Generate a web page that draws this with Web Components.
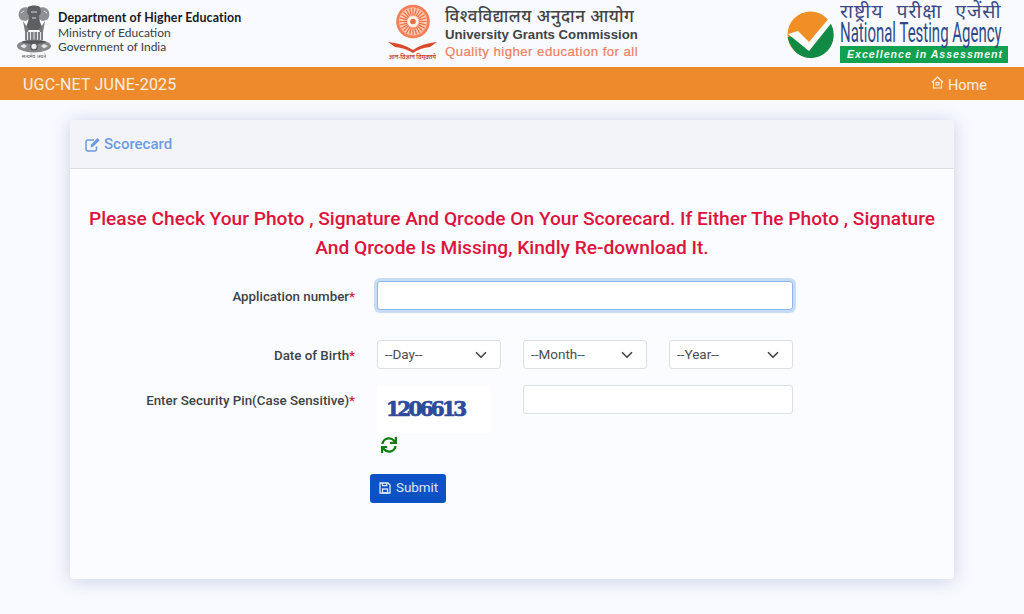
<!DOCTYPE html>
<html lang="en"><head><meta charset="utf-8"><title>Scorecard</title>
<style>
html,body{margin:0;padding:0;background:#f8faff;height:614px;overflow:hidden;font-family:Roboto,"Liberation Sans",sans-serif;color:#333}
</style></head><body>
<site-header></site-header>
<nav-bar></nav-bar>
<score-card></score-card>
<script>
function el(name, html){customElements.define(name,class extends HTMLElement{constructor(){super();this.attachShadow({mode:'open'}).innerHTML=html;}});}
const hindi='"Noto Sans","Noto Sans CJK SC","DejaVu Sans",sans-serif';
el('moe-logo',`<style>:host{display:flex;align-items:flex-start;gap:6px;font-family:Lato,"Noto Sans",sans-serif;color:#3a3d42}
.t{display:flex;flex-direction:column;padding-top:11px;font-size:12px;line-height:14.7px;white-space:nowrap}b{color:#17191d;font-size:12.4px;font-weight:700;letter-spacing:.14px}svg{display:block;margin:4px 0 0 -1px}text{font:5px ${hindi}}</style>
<svg width="36" height="55" viewBox="0 0 36 55">
<g fill="#6f7174">
<path d="M3 8c1-4 6-6 10-4l1 3-2 4 2 3-4 3-5-1c-2-2-3-5-2-8z" fill="#8e9093"/><path d="M33 8c-1-4-6-6-10-4l-1 3 2 4-2 3 4 3 5-1c2-2 3-5 2-8z" fill="#8e9093"/>
<path d="M12 3c3-2 9-2 12 0l1 5-2 5 1 5 2 5-2 3H12l-2-3 2-5 1-5-2-5z" fill="#5d5f62"/>
<path d="M7 17c2 3 4 6 6 8l-1 3H9zM29 17c-2 3-4 6-6 8l1 3h3z" fill="#777a7d"/>
<rect x="9" y="28" width="18" height="8" fill="#7d7f82"/></g>
<path d="M11.500 28v8M14.500 28v8M18 27v9M21.500 28v8M24.500 28v8" stroke="#e6e7e9" stroke-width="1"/>
<path d="M5 9l3-2M31 9l-3-2M15 8h6M16 14h4" stroke="#d8d9db" stroke-width="1"/>
<ellipse cx="18" cy="42" rx="17" ry="6.500" fill="#85878a"/>
<ellipse cx="18" cy="38" rx="12" ry="1.800" fill="#54565a"/>
<circle cx="18" cy="42.500" r="3.300" fill="#eceded" stroke="#55575a" stroke-width="1.300"/>
<path d="M4 42l4-2 3 2-3 2.500zM32 42l-4-2-3 2 3 2.500z" fill="#e3e4e6"/>
<text x="18" y="53.500" text-anchor="middle" fill="#55575a">सत्यमेव जयते</text>
</svg>
<div class="t"><b>Department of Higher Education</b><span>Ministry of Education</span><span>Government of India</span></div>`);
const spokes=Array.from({length:24},(_,i)=>{const a=i*Math.PI/12;const c=Math.cos(a),s=Math.sin(a);return `M${(20+6*c).toFixed(1)} ${(17.500+6*s).toFixed(1)}L${(20+13.500*c).toFixed(1)} ${(17.500+13.500*s).toFixed(1)}`}).join('');
el('ugc-logo',`<style>:host{display:flex;gap:8px;align-items:flex-start;font-family:"Liberation Sans",Arial,sans-serif}
svg{display:block;margin-top:4px}.t{display:flex;flex-direction:column;padding-top:6px;white-space:nowrap}
.h{font:500 17px/20px ${hindi};color:#444;letter-spacing:.5px}.e{font-weight:700;font-size:13.2px;line-height:17px;color:#3f4347}.q{font-size:13.2px;line-height:17px;color:#ee7f5f;letter-spacing:.47px;-webkit-text-stroke:.2px #ee7f5f}text{font:600 6px ${hindi}}</style>
<svg width="49" height="56" viewBox="0 0 49 56"><g transform="translate(5 0)"><circle cx="20" cy="17.500" r="16.800" fill="#f47f57"/><circle cx="20" cy="17.500" r="14" fill="#fdc9b2"/><path d="${spokes}" stroke="#f06f42" stroke-width="1.200"/><circle cx="20" cy="17.500" r="5.500" fill="#fff0e8"/><circle cx="20" cy="17.500" r="2.800" fill="#f06f42"/></g>
<path d="M0 38q14 1 25 8q10-7 24-8l-7 5q-10 1-17 6q-8-5-18-6z" fill="#da4a2c"/><text x="24.500" y="55" text-anchor="middle" fill="#c9432c" textLength="47" lengthAdjust="spacingAndGlyphs">ज्ञान-विज्ञान विमुक्तये</text></svg>
<div class="t"><span class="h">विश्वविद्यालय अनुदान आयोग</span><span class="e">University Grants Commission</span><span class="q">Quality higher education for all</span></div>`);
el('nta-logo',`<style>:host{display:flex;gap:6px;align-items:flex-start;font-family:"Liberation Sans",Arial,sans-serif}
svg{display:block;margin-top:11px}.t{display:flex;flex-direction:column;width:168px;padding-top:2px;white-space:nowrap;color:#2c4a86;overflow:hidden}
.h{font:400 19.5px/18px ${hindi};color:#3b4a86;letter-spacing:.9px;word-spacing:7px}.n{display:block;font-family:Roboto,sans-serif;font-size:27px;line-height:26px;height:26px;transform:scaleX(.555);transform-origin:0 50%}
.x{background:#12a150;color:#f2fbf4;font:italic 700 10.600px/17px "Liberation Sans",sans-serif;letter-spacing:1px;height:17px;padding-left:7px}</style>
<svg width="47" height="47" viewBox="0 0 47 47"><circle cx="23.500" cy="23.500" r="23" fill="#ef8f26"/><path d="M.6 26c3 13 12 21 23 21 13 0 23-10 23-23 0-6-2-10-4-13L23 33 12 24z" fill="#118a45"/><path d="M1 23l10-3 11 11L43 6l3 4-24 30z" fill="#fff"/></svg>
<div class="t"><span class="h">राष्ट्रीय परीक्षा एजेंसी</span><span class="n">National Testing Agency</span><span class="x">Excellence in Assessment</span></div>`);
el('site-header',`<style>:host{display:grid;grid-template-columns:371px 399px 1fr;height:67px;padding-left:17px;background:#f8fafd;overflow:hidden}</style><moe-logo></moe-logo><ugc-logo></ugc-logo><nta-logo></nta-logo>`);
el('nav-bar',`<style>:host{display:flex;align-items:center;justify-content:space-between;height:33px;padding:1px 37px 0 23px;background:#ec8a2c;color:#fbeee0;font-size:16px;box-sizing:border-box}
.b{letter-spacing:.2px}.h{display:flex;align-items:center;gap:4px;font-size:14.5px;padding-top:2px}svg{display:block;margin-top:-6px}</style>
<span class="b">UGC-NET JUNE-2025</span><span class="h"><svg width="13" height="13" viewBox="0 0 13 13" fill="none" stroke="#fbeee0" stroke-width="1.1"><path d="M.8 6.500 6.500 1l5.700 5.500M2.500 5.500v6.500h8V5.500"/><rect x="5" y="6.500" width="3" height="2.500"/></svg>Home</span>`);
el('form-row',`<style>:host{display:grid;grid-template-columns:285px 416px;column-gap:22px;align-items:start}
.l{text-align:right;font-weight:500;font-size:13.35px;color:#3d4247;line-height:18px;padding-top:var(--lt,0px)}.r{color:#dc143c}</style>
<div class="l"><slot name="label"></slot><span class="r">*</span></div><div><slot></slot></div>`);
el('ui-select',`<style>:host{display:flex;align-items:center;justify-content:space-between;box-sizing:border-box;height:29px;padding:0 13px 2px 7px;border:1px solid #dcdfe4;border-radius:3px;background:#fff;font-size:13.5px;color:#4a4e53}svg{display:block;margin-top:2px}</style>
<span><slot></slot></span><svg width="12" height="8" viewBox="0 0 12 8" fill="none" stroke="#3d4145" stroke-width="1.600"><path d="M1 1.200 6 6.200l5-5"/></svg>`);
el('ui-button',`<style>:host{display:inline-flex;align-items:center;gap:5px;box-sizing:border-box;height:29px;width:76px;padding:0 0 2px 9px;border-radius:3px;background:#0d52c4;color:#dfe8f7;font-size:13.4px}svg{display:block}</style>
<svg width="12" height="12" viewBox="0 0 12 12" fill="none" stroke="#dfe8f7" stroke-width="1.300"><path d="M1 1h8l2 2v8H1z"/><path d="M3.500 1v2.600h4.200V1"/><rect x="3.500" y="7" width="5" height="4"/></svg><slot></slot>`);
el('score-card',`<style>:host{display:flex;flex-direction:column;box-sizing:border-box;width:884px;height:459px;margin:20px 0 0 70px;background:#fff;border-radius:4px;box-shadow:0 2px 18px rgba(110,125,175,.33)}
.head{display:flex;align-items:center;gap:3px;box-sizing:border-box;height:49px;padding:0 15px;background:#f3f4f7;border-bottom:1px solid #dcdde0;border-radius:4px 4px 0 0;color:#6e9be0;font-size:15px;font-weight:500}
.body{display:flex;flex-direction:column;background:#fbfcff;flex:1;border-radius:0 0 4px 4px}
h2{margin:35px 0 19px;padding:0 10px;text-align:center;color:#dc143c;font-size:19.15px;line-height:29px;font-weight:500}
.form{display:flex;flex-direction:column}
.f{display:block;box-sizing:border-box;width:100%;border:1px solid #dcdfe4;border-radius:3px;background:#fff;outline:none;padding:0;margin:0}
.app{height:29px;border-color:#8eb6ec;box-shadow:0 0 0 3px #c9dcf7}
.sel{display:grid;grid-template-columns:repeat(3,124px);gap:22px}
.cap{display:flex;gap:32px}.capl{width:114px}
.img{display:flex;align-items:center;box-sizing:border-box;height:48px;padding-left:9px;background:#fff;color:#2d4a9c;font:700 20px "DejaVu Serif",serif;letter-spacing:-2.700px;-webkit-text-stroke:.7px #2d4a9c}
.rf{display:block;margin:4px 0 0 4px}.capi{width:270px;height:29px}
.sub{margin:21px 0 0 300px}.sp1{height:30px}.sp2{height:16px}</style>
<div class="head"><svg width="16" height="15" viewBox="0 0 16 15" fill="none" stroke="#6e9be0" stroke-width="1.500"><path d="M11.500 9.500V12a2 2 0 0 1-2 2H3a2 2 0 0 1-2-2V5a2 2 0 0 1 2-2h6"/><path d="M6 7.500 12.500 1l2.200 2.200-6.500 6.500-2.700.5z" fill="#6e9be0" stroke="none"/></svg>Scorecard</div>
<div class="body"><h2>Please Check Your Photo , Signature And Qrcode On Your Scorecard. If Either The Photo , Signature And Qrcode Is Missing, Kindly Re-download It.</h2>
<div class="form">
<form-row style="--lt:7px"><span slot="label">Application number</span><input class="f app" aria-label="Application number"></form-row>
<div class="sp1"></div>
<form-row style="--lt:7px"><span slot="label">Date of Birth</span><div class="sel"><ui-select>--Day--</ui-select><ui-select>--Month--</ui-select><ui-select>--Year--</ui-select></div></form-row>
<div class="sp2"></div>
<form-row style="--lt:7px"><span slot="label">Enter Security Pin(Case Sensitive)</span><div class="cap"><div class="capl"><div class="img">1206613</div><svg class="rf" width="16" height="16" viewBox="0 0 512 512" fill="#0f7d12"><path d="M440.65 12.57l4 82.77A247.16 247.16 0 0 0 255.83 8C134.73 8 33.91 94.92 12.29 209.82A12 12 0 0 0 24.09 224h49.05a12 12 0 0 0 11.67-9.26 175.91 175.91 0 0 1 317-56.94l-101.46-4.86a12 12 0 0 0-12.57 12v47.41a12 12 0 0 0 12 12H500a12 12 0 0 0 12-12V12a12 12 0 0 0-12-12h-47.37a12 12 0 0 0-11.98 12.57zM255.83 432a175.61 175.61 0 0 1-146-77.8l101.8 4.87a12 12 0 0 0-12.57-12v-47.4a12 12 0 0 0-12-12H12a12 12 0 0 0-12 12V500a12 12 0 0 0 12 12h47.35a12 12 0 0 0 12-12.6l-4.15-82.57A247.17 247.17 0 0 0 255.83 504c121.11 0 221.93-86.92 243.55-201.82a12 12 0 0 0-11.8-14.18h-49.05a12 12 0 0 0-11.67 9.26A175.86 175.86 0 0 1 255.83 432z"/></svg></div><input class="f capi" aria-label="Security pin"></div></form-row>
<div class="sub"><ui-button>Submit</ui-button></div>
</div></div>`);
</script></body></html>
